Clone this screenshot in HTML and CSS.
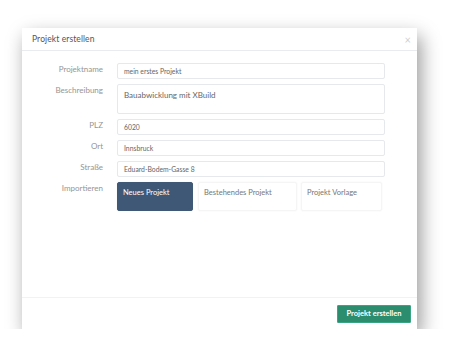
FILE: index.html
```html
<!DOCTYPE html>
<html lang="de">
<head>
    <meta charset="UTF-8">
    <meta name="viewport" content="width=device-width, initial-scale=1.0">
    <title>Projekt erstellen</title>
    <link rel="stylesheet" href="styles.css">
</head>
<body>
    <div id="modal">
        <div class="modal-header">
            <span class="modal-title">Projekt erstellen</span>
            <span class="close">&times;</span>
        </div>
        <div class="modal-body">
            <label class="field-label">Projektname</label>
            <div class="input">mein erstes Projekt</div>

            <label class="field-label">Beschreibung</label>
            <div class="input textarea">Bauabwicklung mit XBuild</div>

            <label class="field-label">PLZ</label>
            <div class="input">6020</div>

            <label class="field-label">Ort</label>
            <div class="input">Innsbruck</div>

            <label class="field-label">Straße</label>
            <div class="input">Eduard-Bodem-Gasse 8</div>

            <label class="field-label">Importieren</label>
            <div class="import-options">
                <div class="option active">Neues Projekt</div>
                <div class="option option-wide">Bestehendes Projekt</div>
                <div class="option option-last">Projekt Vorlage</div>
            </div>
        </div>
        <div class="modal-footer">
            <button class="btn-primary">Projekt erstellen</button>
        </div>
    </div>
</body>
</html>
```

FILE: styles.css
```css
body {
    margin: 0;
    padding: 28px 0 0 22px;
    background: #fff;
    font-family: Lato, "Open Sans", sans-serif;
}

#modal {
    width: 395px;
    height: 301px;
    background: #fff;
    box-shadow: 4px 8px 18px rgba(0, 0, 0, 0.4);
    display: flex;
    flex-direction: column;
}

.modal-header {
    height: 22px;
    border-bottom: 1px solid #e9ecef;
    display: flex;
    align-items: center;
    justify-content: space-between;
    padding: 0 6px 0 10px;
}

.modal-title {
    font-size: 8.5px;
    color: #555;
    letter-spacing: 0.1px;
}

.close {
    font-size: 11px;
    color: #d0d0d0;
}

.modal-body {
    flex: 1;
    display: grid;
    grid-template-columns: 81px 268px;
    column-gap: 14px;
    row-gap: 5px;
    align-content: start;
    padding-top: 12px;
}

.field-label {
    font-size: 8px;
    color: #959595;
    text-align: right;
    padding-top: 1px;
}

.input {
    box-sizing: border-box;
    height: 16px;
    border: 1px solid #e6e9ec;
    border-radius: 2px;
    font-size: 6.8px;
    color: #666;
    padding: 3px 6px 0;
}

.input.textarea {
    height: 30px;
    font-size: 8px;
    padding-top: 5px;
}

.import-options {
    display: flex;
    gap: 4px;
}

.option {
    box-sizing: border-box;
    height: 29px;
    width: 81px;
    padding: 5px 5px;
    font-size: 7.5px;
    color: #777;
    border: 1px solid #f5f5f5;
    border-radius: 2px;
    box-shadow: 0 0 2px rgba(0, 0, 0, 0.06);
}

.option.active {
    width: 76px;
    margin-right: 1px;
    background: #3f5875;
    color: #fff;
    border-color: #3f5875;
}

.option-wide {
    width: 99px;
}

.modal-footer {
    height: 31px;
    border-top: 1px solid #f2f2f2;
    display: flex;
    justify-content: flex-end;
    align-items: center;
    padding-right: 6px;
}

.btn-primary {
    width: 74px;
    height: 18px;
    background: #2b8c6e;
    border: 1px solid #3aa583;
    border-radius: 1px;
    color: #fff;
    font-family: Lato, sans-serif;
    font-weight: bold;
    font-size: 7.5px;
    padding: 0;
}
```
